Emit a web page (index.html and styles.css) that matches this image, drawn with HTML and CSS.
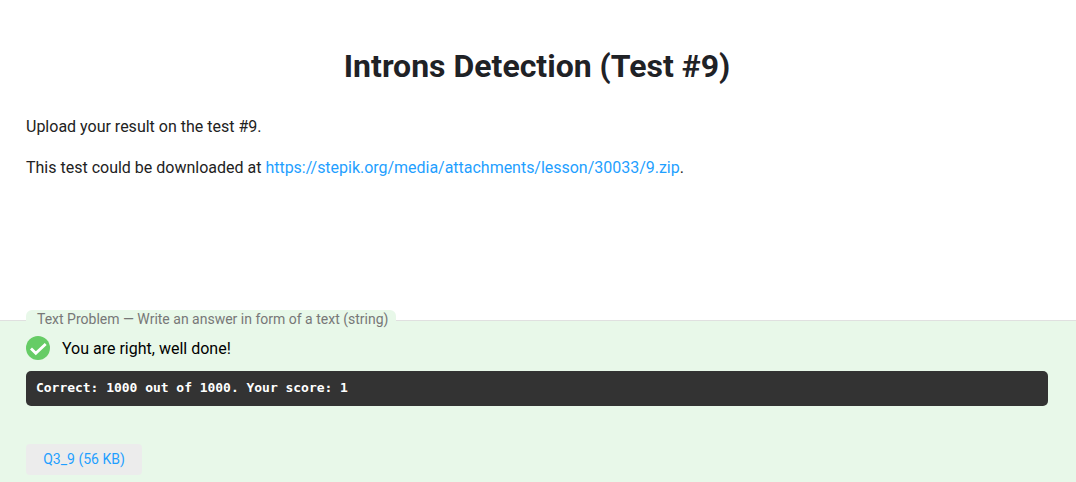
FILE: index.html
```html
<!DOCTYPE html>
<html lang="en">
<head>
    <meta charset="UTF-8">
    <meta name="viewport" content="width=device-width, initial-scale=1.0">
    <title>Introns Detection (Test #9)</title>
    <link rel="stylesheet" href="styles.css">
</head>
<body>
    <div class="lesson">
        <h1>Introns Detection (Test #9)</h1>
        <p>Upload your result on the test #9.</p>
        <p>This test could be downloaded at <a href="#">https://stepik.org/media/attachments/lesson/30033/9.zip</a>.</p>
    </div>

    <div class="quiz">
        <div class="quiz-legend">Text Problem — Write an answer in form of a text (string)</div>
        <div class="status">
            <svg class="status-icon" width="24" height="24" viewBox="0 0 24 24">
                <circle cx="12" cy="12" r="12" fill="#66cc66"/>
                <path d="M5 12.5l4.8 4.8L19.7 8" fill="none" stroke="#fff" stroke-width="2.8"/>
            </svg>
            <span>You are right, well done!</span>
        </div>
        <pre class="feedback">Correct: 1000 out of 1000. Your score: 1</pre>
        <a class="attempt" href="#">Q3_9 (56 KB)</a>
    </div>
</body>
</html>
```

FILE: styles.css
```css
html, body {
    height: 100%;
}
body {
    margin: 0;
    background-color: white;
    font-family: Roboto, "Liberation Sans", sans-serif;
    font-size: 16px;
    line-height: 21px;
    color: #222;
    display: flex;
    flex-direction: column;
    overflow: hidden;
}
a {
    color: #1f9fff;
    text-decoration: none;
}
.lesson {
    height: 320px;
    flex-shrink: 0;
    box-sizing: border-box;
    padding: 45px 28px 0 26px;
}
h1 {
    margin: 0 0 29px;
    font-size: 32px;
    line-height: 42px;
    font-weight: 700;
    text-align: center;
    color: #1f2226;
}
p {
    margin: 0 0 20px;
}
p a {
    letter-spacing: -0.02px;
}
.quiz {
    flex: 1;
    background-color: #e8f8e9;
    border-top: 1px solid #e0e0e0;
    padding: 0 28px 0 26px;
}
.quiz-legend {
    display: table;
    margin-top: -11px;
    padding: 0 8px 0 11px;
    height: 18px;
    font-size: 14px;
    line-height: 18px;
    color: #777;
    background-color: #e8f8e9;
    border-radius: 6px 6px 0 0;
}
.status {
    display: flex;
    align-items: center;
    gap: 12px;
    margin-top: 8px;
    color: #000;
}
.status-icon {
    flex-shrink: 0;
}
.feedback {
    margin: 11px 0 38px;
    padding: 8px 10px 10px;
    height: 17px;
    background-color: #333;
    border-radius: 5px;
    color: white;
    font-family: "DejaVu Sans Mono", "Liberation Mono", monospace;
    font-size: 13px;
    line-height: 17px;
    font-weight: 700;
    letter-spacing: -0.03px;
}
.attempt {
    display: block;
    width: 116px;
    height: 31px;
    font-size: 14px;
    line-height: 31px;
    text-align: center;
    background-color: #ececec;
    border-radius: 4px;
}
```
